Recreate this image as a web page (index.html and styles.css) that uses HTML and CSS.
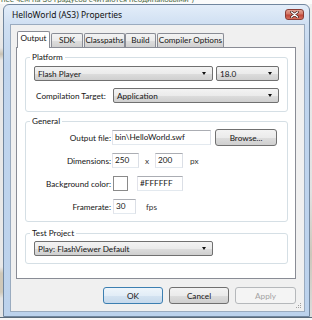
FILE: index.html
```html
<!DOCTYPE html>
<html>
<head>
<meta charset="utf-8">
<link rel="stylesheet" href="styles.css">
</head>
<body>
<div class="top-strip"><span>нее чем на 30 градусов считаются неодинаковыми")</span></div>
<div class="middle">
  <div class="left-edge"></div>
  <div class="window">
    <div class="titlebar">
      <span class="title">HelloWorld (AS3) Properties</span>
      <div class="close">
        <svg width="9" height="7" viewBox="0 0 9 7"><path d="M1.5 1 L7.5 6 M7.5 1 L1.5 6" stroke="#3a1a1a" stroke-width="2.6" stroke-linecap="round"/><path d="M1.5 1 L7.5 6 M7.5 1 L1.5 6" stroke="#fff" stroke-width="1.4" stroke-linecap="round"/></svg>
      </div>
    </div>
    <div class="frame">
      <div class="client">
        <div class="tabs">
          <div class="tab tab-output active">Output</div>
          <div class="tab tab-sdk">SDK</div>
          <div class="tab tab-classpaths">Classpaths</div>
          <div class="tab tab-build">Build</div>
          <div class="tab tab-compiler">Compiler Options</div>
        </div>
        <div class="panel">
          <fieldset class="group group-platform">
            <legend>Platform</legend>
            <div class="prow">
              <div class="combo combo-player"><span>Flash Player</span><i class="arrow"></i></div>
              <div class="combo combo-version"><span>18.0</span><i class="arrow"></i></div>
            </div>
            <div class="prow prow-target">
              <span class="plabel">Compilation Target:</span>
              <div class="combo combo-target"><span>Application</span><i class="arrow"></i></div>
            </div>
          </fieldset>
          <fieldset class="group group-general">
            <legend>General</legend>
            <div class="grow">
              <span class="glabel">Output file:</span>
              <div class="field field-output">bin\HelloWorld.swf</div>
              <div class="btn btn-browse">Browse...</div>
            </div>
            <div class="grow">
              <span class="glabel">Dimensions:</span>
              <div class="field field-w">250</div>
              <span class="times">x</span>
              <div class="field field-h">200</div>
              <span class="unit">px</span>
            </div>
            <div class="grow">
              <span class="glabel">Background color:</span>
              <div class="swatch"></div>
              <div class="field field-hex">#FFFFFF</div>
            </div>
            <div class="grow">
              <span class="glabel">Framerate:</span>
              <div class="field field-fps">30</div>
              <span class="unit unit-fps">fps</span>
            </div>
          </fieldset>
          <fieldset class="group group-test">
            <legend>Test Project</legend>
            <div class="combo combo-test"><span>Play: FlashViewer Default</span><i class="arrow"></i></div>
          </fieldset>
        </div>
        <div class="buttons">
          <div class="btn btn-ok">OK</div>
          <div class="btn btn-cancel">Cancel</div>
          <div class="btn btn-apply">Apply</div>
        </div>
        <svg class="grip" width="6" height="6" viewBox="0 0 6 6">
          <rect x="4" y="0" width="1" height="1" fill="#a0a0a0"/>
          <rect x="2" y="2" width="1" height="1" fill="#a0a0a0"/>
          <rect x="4" y="2" width="1" height="1" fill="#a0a0a0"/>
          <rect x="0" y="4" width="1" height="1" fill="#a0a0a0"/>
          <rect x="2" y="4" width="1" height="1" fill="#a0a0a0"/>
          <rect x="4" y="4" width="1" height="1" fill="#a0a0a0"/>
        </svg>
      </div>
    </div>
  </div>
  <div class="right-edge"></div>
</div>
<div class="bottom-strip"><span>элемент будет выделен, тогда как другие элементы останутся неизменными</span></div>
</body>
</html>
```

FILE: styles.css
```css
* { box-sizing: border-box; }

body {
  margin: 0;
  width: 312px;
  height: 320px;
  overflow: hidden;
  background: #f4f4f4;
  font-family: Lato, "Noto Sans", sans-serif;
  font-size: 8.2px;
  color: #151515;
}

.top-strip {
  height: 4px;
  overflow: hidden;
  background: #fbfbfb;
  white-space: nowrap;
  color: #4d6a45;
  font-size: 8px;
  line-height: 10px;
}
.top-strip span { display: block; margin-top: -6px; margin-left: 1px; }

.middle { display: flex; height: 313px; }

.left-edge {
  width: 3px;
  background: linear-gradient(to bottom, #f2f2f2 0, #e6e6e6 14%, #c9c2b4 16%, #e8e8e8 18%, #e8e8e8 84%, #cfc8b9 86%, #cfc8b9 92%, #e4e4e4 94%);
}

.right-edge {
  flex: 1;
  background: linear-gradient(to bottom, #efefef 0, #e2e2e2 60%, #cdc7bb 80%, #dcdcdc 100%);
}

.window {
  width: 307px;
  height: 313px;
  border: 1px solid #71869e;
  border-radius: 6px 6px 0 0;
  background: linear-gradient(to bottom, #e3edf9 0, #cfdff2 20px, #c0d5ee 60px, #bcd2ec 100%);
  display: flex;
  flex-direction: column;
}

.titlebar {
  height: 19px;
  display: flex;
  align-items: center;
  padding-left: 8px;
  flex: none;
}
.title { font-family: "Noto Sans", sans-serif; font-size: 8.5px; color: #111; }
.close {
  margin-left: auto;
  margin-right: 5px;
  align-self: flex-start;
  margin-top: 4px;
  width: 19px;
  height: 11px;
  border: 1px solid #8a3d36;
  border-radius: 3px;
  background: linear-gradient(to bottom, #e4a394 0, #d27868 45%, #c0463a 55%, #d4705e 100%);
  display: flex;
  align-items: center;
  justify-content: center;
}

.frame {
  flex: 1;
  padding: 0 4px 4px 6px;
  display: flex;
}

.client {
  position: relative;
  flex: 1;
  background: #f0f0f0;
  border: 1px solid #9aabbf;
  padding: 6px 7px 0 5px;
}

.tabs {
  display: flex;
  align-items: flex-end;
  height: 16px;
  margin-left: 1px;
  position: relative;
  z-index: 1;
}
.tab {
  height: 14px;
  border: 1px solid #898c95;
  border-bottom: none;
  border-radius: 2px 2px 0 0;
  background: linear-gradient(to bottom, #f3f3f3 0, #ebebeb 50%, #dedede 51%, #d0d0d0 100%);
  line-height: 12px;
  text-align: center;
  white-space: nowrap;
}
.tab.active {
  height: 17px;
  margin-bottom: -1px;
  background: #fff;
  line-height: 13px;
}
.tab-output { width: 33px; }
.tab-sdk { width: 32px; margin-left: 1px; }
.tab-classpaths { width: 41px; margin-left: 1px; }
.tab-build { width: 31px; }
.tab-compiler { width: 67px; margin-left: 1px; }

.panel {
  width: 280px;
  height: 232px;
  background: #fff;
  border: 1px solid #898c95;
  padding: 4px 7px 0 8px;
}

.group {
  margin: 0;
  border: 1px solid #d5dfe5;
  border-radius: 3px;
  padding: 4px 7px 8px 8px;
  min-width: 0;
}
.group legend {
  padding: 0 2px;
  margin-left: -4px;
  line-height: 10px;
}
.group-general { margin-top: 4px; padding-top: 3px; padding-bottom: 6px; }
.group-test { margin-top: 6px; padding-top: 3px; padding-bottom: 7px; }

.prow { display: flex; align-items: center; gap: 3px; }
.prow-target {
  display: grid;
  grid-template-columns: 79px 166px;
  gap: 0;
  margin-top: 7px;
}
.plabel { padding-left: 2px; white-space: nowrap; }

.combo {
  height: 15px;
  border: 1px solid #707070;
  border-radius: 2px;
  background: linear-gradient(to bottom, #f3f3f3 0, #ebebeb 50%, #dddddd 51%, #cfcfcf 100%);
  display: flex;
  align-items: center;
  padding-left: 3px;
  padding-right: 6px;
  flex: none;
}
.combo span { flex: 1; white-space: nowrap; }
.arrow {
  width: 0;
  height: 0;
  border-left: 2.5px solid transparent;
  border-right: 2.5px solid transparent;
  border-top: 3px solid #111;
}
.combo-player { width: 179px; }
.combo-version { width: 63px; }
.combo-target { width: 166px; }
.combo-test { width: 179px; }

.grow {
  display: flex;
  align-items: center;
  height: 17px;
}
.grow + .grow { margin-top: 6px; }
.glabel { width: 78px; text-align: right; padding-right: 1px; flex: none; white-space: nowrap; }

.field {
  height: 15px;
  background: #fff;
  border: 1px solid;
  border-color: #abadb3 #dbdfe6 #e3e9ef #e2e3ea;
  padding-left: 2px;
  line-height: 13px;
  white-space: nowrap;
  overflow: hidden;
  flex: none;
}
.field-output { width: 99px; }
.field-w { width: 27px; }
.field-h { width: 28px; }
.field-hex { width: 46px; margin-left: 9px; }
.field-fps { width: 23px; margin-left: 1px; }

.times { width: 16px; text-align: center; color: #333; }
.unit { margin-left: 7px; color: #333; }
.unit-fps { margin-left: 10px; }

.swatch {
  width: 15px;
  height: 15px;
  margin-left: 1px;
  background: #fff;
  border: 1px solid #8a8a8a;
}

.btn {
  height: 17px;
  border: 1px solid #707070;
  border-radius: 3px;
  background: linear-gradient(to bottom, #f3f3f3 0, #ebebeb 50%, #dddddd 51%, #cfcfcf 100%);
  display: flex;
  align-items: center;
  justify-content: center;
  flex: none;
}
.btn-browse { width: 62px; margin-left: 4px; }

.buttons {
  display: flex;
  justify-content: flex-end;
  gap: 6px;
  margin-top: 8px;
  padding-right: 1px;
}
.btn-ok { width: 60px; border-color: #3c7fb1; background: linear-gradient(to bottom, #eef5fb 0, #e2edf7 50%, #d4e3f1 51%, #c6d9ec 100%); }
.btn-cancel { width: 60px; }
.btn-apply { width: 61px; border-color: #b5b8bb; background: #f4f4f4; color: #a3a3a3; }

.grip { position: absolute; right: 2px; bottom: 2px; }

.bottom-strip {
  height: 3px;
  overflow: hidden;
  background: #f6f6f6;
  white-space: nowrap;
  color: #555;
  font-size: 8px;
  line-height: 10px;
  border-top: 1px solid #5a6a7a;
}
.bottom-strip span { display: block; margin-left: 2px; margin-top: 0; }
```
